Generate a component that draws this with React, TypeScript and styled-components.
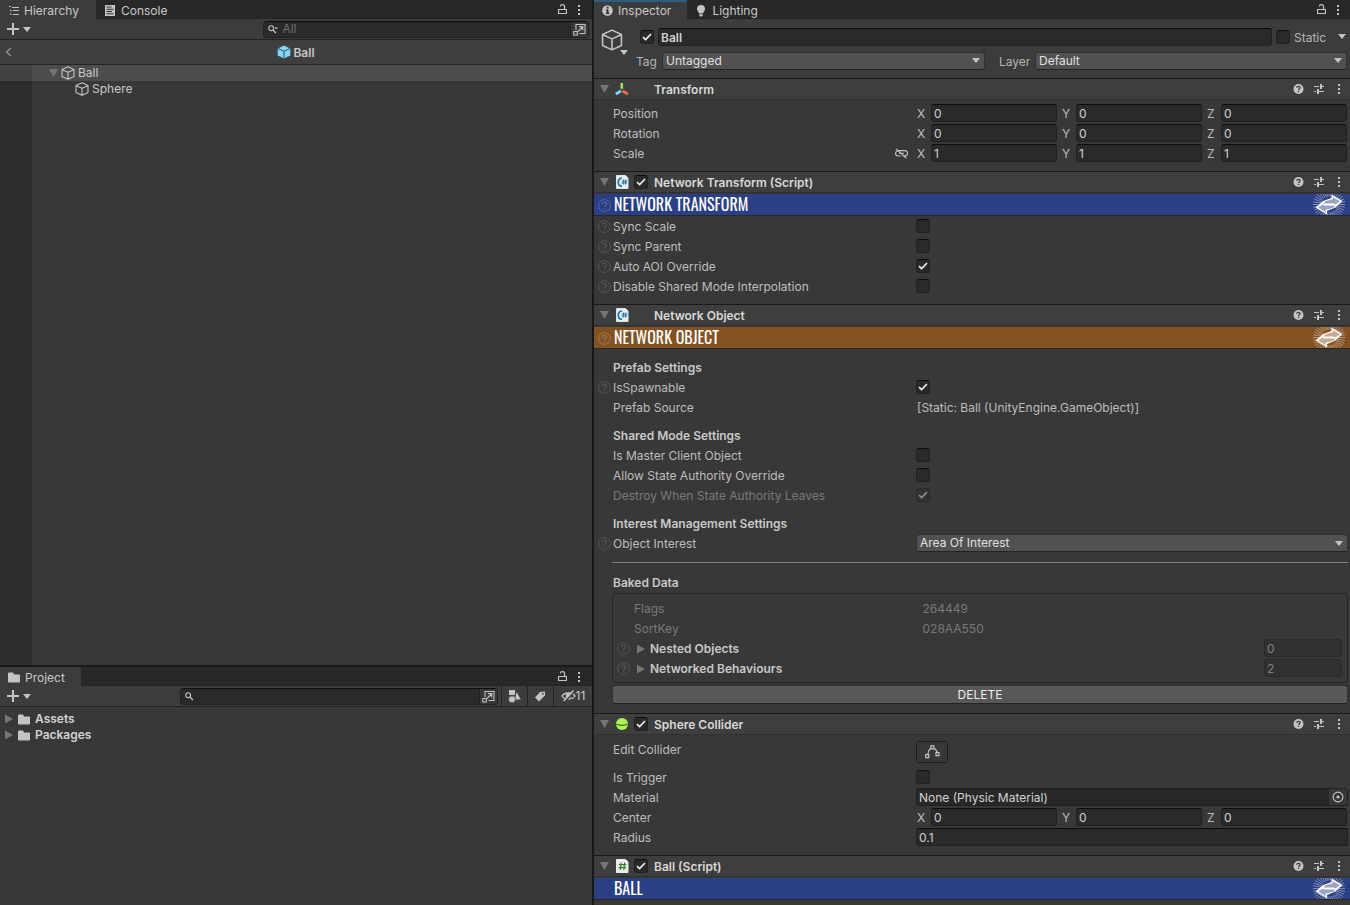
import React, { useId } from "react";
import styled, { createGlobalStyle, css } from "styled-components";

const GlobalStyle = createGlobalStyle`
  *, *::before, *::after { box-sizing: border-box; }
  html, body { margin: 0; background: #191919; }
  body, button, input, select {
    font-family: Inter, "Liberation Sans", sans-serif;
    font-size: 12px;
    line-height: 16px;
    color: #c8c8c8;
  }
  h1, h2, h3, ul { margin: 0; padding: 0; font-size: 12px; list-style: none; }
  svg { display: block; flex: none; }
`;

/* ---------- shell ---------- */

const Editor = styled.div`
  display: grid;
  grid-template-columns: minmax(0, 592fr) minmax(0, 756fr);
  column-gap: 2px;
  height: 100vh;
  background: #191919;
  overflow: hidden;
`;

const LeftColumn = styled.div`
  display: grid;
  grid-template-rows: minmax(0, 665fr) minmax(0, 238fr);
  row-gap: 2px;
  min-height: 0;
`;

const Panel = styled.section`
  display: flex;
  flex-direction: column;
  min-width: 0;
  min-height: 0;
  background: #383838;
  overflow: hidden;
`;

const TabBar = styled.div`
  display: flex;
  flex: none;
  height: 19px;
  background: #282828;
  box-shadow: inset 0 -1px #232323;
`;

const Tab = styled.button<{ $active?: boolean; $focus?: boolean; $pad: number }>`
  display: flex;
  align-items: center;
  gap: 5px;
  border: 0;
  padding: 2px ${(p) => p.$pad}px 0 8px;
  background: ${(p) => (p.$active ? "#3c3c3c" : "transparent")};
  box-shadow: ${(p) => (p.$focus ? "inset 0 2px #2c5d87" : "none")};
`;

const TabTools = styled.div<{ $right: number }>`
  display: flex;
  align-items: center;
  gap: 6px;
  margin-left: auto;
  padding-right: ${(p) => p.$right}px;
`;

const IconButton = styled.button`
  display: flex;
  align-items: center;
  justify-content: center;
  flex: none;
  border: 0;
  padding: 0;
  background: none;
`;

const Toolbar = styled.div`
  display: flex;
  flex: none;
  align-items: center;
  height: 21px;
  background: #3c3c3c;
  border-bottom: 1px solid #232323;
`;

const AddButton = styled(IconButton)`
  gap: 4px;
  margin-left: 7px;
`;

const SearchBox = styled.label<{ $width: string }>`
  display: flex;
  align-items: center;
  width: ${(p) => p.$width};
  height: 17px;
  margin: 0 3px 0 auto;
  padding-left: 4px;
  background: #2a2a2a;
  border: 1px solid #212121;
  border-top-color: #0d0d0d;
  border-radius: 4px;
  overflow: hidden;
`;

const SearchInput = styled.input`
  flex: 1;
  min-width: 0;
  border: 0;
  padding: 0 4px;
  background: none;
  outline: 0;
  &::placeholder { color: #717171; opacity: 1; }
`;

const SearchJump = styled(IconButton)`
  width: 18px;
  height: 16px;
  background: #383838;
  border-left: 1px solid #212121;
`;

const ToolCell = styled(IconButton)<{ $width: number }>`
  width: ${(p) => p.$width}px;
  height: 20px;
  border-left: 1px solid #232323;
`;

/* ---------- hierarchy ---------- */

const StageHeader = styled.div`
  display: grid;
  grid-template-columns: 32px 1fr 32px;
  align-items: center;
  flex: none;
  height: 25px;
  background: #3f3f3f;
  border-bottom: 1px solid #232323;
`;

const StageBack = styled(IconButton)`
  width: 17px;
`;

const StageTitle = styled.h2`
  display: flex;
  justify-content: center;
  gap: 2px;
  padding-top: 1px;
  font-weight: 600;
`;

const Tree = styled.ul<{ $gutter?: boolean }>`
  flex: 1;
  padding-top: ${(p) => (p.$gutter ? 0 : 4)}px;
  ${(p) =>
    p.$gutter &&
    css`
      background: linear-gradient(to right, #2d2d2d 32px, #383838 32px);
    `}
`;

const TreeRow = styled.li<{ $indent: number; $selected?: boolean; $bold?: boolean }>`
  display: flex;
  align-items: center;
  gap: ${(p) => (p.$bold ? 5 : 3)}px;
  height: 16px;
  padding-left: ${(p) => p.$indent}px;
  font-weight: ${(p) => (p.$bold ? 600 : 400)};
  color: ${(p) => (p.$bold ? "#d2d2d2" : "#c8c8c8")};
  ${(p) =>
    p.$selected &&
    css`
      background: linear-gradient(to right, #424242 32px, #4d4d4d 32px);
    `}
`;

/* ---------- inspector ---------- */

const ObjectHeader = styled.header`
  display: grid;
  grid-template-columns: 35px minmax(0, 1fr);
  flex: none;
  height: 59px;
  padding: 8px 3px 0 7px;
  background: #3c3c3c;
`;

const ObjectIcon = styled(IconButton)`
  flex-direction: column;
  align-items: flex-start;
  justify-content: flex-start;
  padding-top: 2px;
  svg + svg { margin: -1px 0 0 19px; }
`;

const HeaderLines = styled.div`
  display: flex;
  flex-direction: column;
  gap: 5px;
`;

const HeaderLine = styled.div`
  display: flex;
  align-items: center;
  height: 19px;
`;

const NameLine = styled(HeaderLine)`
  gap: 4px;
  padding: 0 1px 0 4px;
`;

const HeaderLabel = styled.label<{ $width: number; $indent?: number }>`
  flex: none;
  width: ${(p) => p.$width}px;
  padding: 2px 0 0 ${(p) => p.$indent ?? 0}px;
  color: #b4b4b4;
`;

const fieldBox = css`
  height: 18px;
  border: 1px solid #212121;
  border-radius: 3px;
`;

const Field = styled.input<{ $bold?: boolean }>`
  ${fieldBox}
  flex: 1;
  width: 100%;
  min-width: 0;
  border-top-color: #0d0d0d;
  padding: 1px 2px 0;
  background: #2a2a2a;
  color: #d2d2d2;
  font-weight: ${(p) => (p.$bold ? 600 : 400)};
  outline: 0;
  &:disabled {
    background: #313131;
    border-color: #2a2a2a;
    color: #818181;
  }
`;

const CountField = styled(Field)`
  flex: none;
  width: 78px;
`;

const Stack = styled.span<{ $grow?: number }>`
  display: grid;
  align-items: center;
  flex: ${(p) => (p.$grow ? `${p.$grow} 1 0` : "none")};
  min-width: 0;
  > * { grid-area: 1 / 1; }
  > svg { pointer-events: none; justify-self: ${(p) => (p.$grow ? "end" : "center")}; }
`;

const SelectInput = styled.select`
  ${fieldBox}
  appearance: none;
  width: 100%;
  border-color: #303030;
  border-bottom-color: #242424;
  padding: 0 3px;
  background: #515151;
  color: #e0e0e0;
  outline: 0;
  & + svg { margin-right: 5px; }
`;

const CheckInput = styled.input`
  appearance: none;
  width: 14px;
  height: 14px;
  margin: 0;
  background: #2a2a2a;
  border: 1px solid #212121;
  border-top-color: #0d0d0d;
  border-radius: 3px;
  &:disabled { background: #313131; border-color: #2a2a2a; }
`;

const ComponentHeader = styled.header`
  display: flex;
  align-items: center;
  flex: none;
  height: 22px;
  padding: 0 5px 0 6px;
  background: #3e3e3e;
  border-top: 1px solid #1a1a1a;
  border-bottom: 1px solid #303030;
`;

const TypeIcon = styled.span`
  display: flex;
  justify-content: center;
  width: 14px;
  margin: 0 5px 0 6px;
`;

const ToggleSlot = styled.span`
  display: flex;
  width: 20px;
`;

const ComponentTitle = styled.h2`
  flex: 1;
  padding-top: 2px;
  color: #d8d8d8;
  font-weight: 600;
`;

const HeaderTools = styled.span`
  display: flex;
  gap: 8px;
  button { width: 12px; }
`;

const Banner = styled.div<{ $color: string }>`
  display: flex;
  align-items: center;
  flex: none;
  height: 22px;
  margin-top: 1px;
  padding: 0 5px 0 4px;
  background: ${(p) => p.$color};
  border-bottom: 1px solid #282828;
`;

const BannerTitle = styled.h3`
  flex: 1;
  padding: 0 0 2px 1px;
  color: #fff;
  font-family: Oswald, "Roboto Condensed", "Liberation Sans", sans-serif;
  font-size: 16px;
  font-weight: 400;
  line-height: 20px;
`;

const HelpSlot = styled.span`
  display: flex;
  width: 15px;
  color: #555;
`;

const BannerHelp = styled(HelpSlot)`
  padding-top: 2px;
  color: rgba(255, 255, 255, 0.2);
`;

const Body = styled.div<{ $top: number }>`
  flex: none;
  padding: ${(p) => p.$top}px 2px 8px 4px;
`;

const Group = styled.div`
  & + & { margin-top: 8px; }
`;

const Row = styled.div`
  display: flex;
  align-items: center;
  height: 20px;
`;

const RowLabel = styled.label<{ $dim?: boolean }>`
  flex: 1;
  padding-top: 1px;
  color: ${(p) => (p.$dim ? "#787878" : "#bebebe")};
`;

const RowValue = styled.div`
  display: flex;
  align-items: center;
  flex: none;
  width: calc(56% + 12px);
`;

const TextValue = styled.output`
  padding: 1px 0 0 1px;
  color: #bebebe;
`;

const Heading = styled.h3`
  height: 20px;
  padding: 2px 0 0 15px;
  font-weight: 600;
  line-height: 18px;
  color: #c8c8c8;
`;

const Vector = styled.div`
  display: grid;
  flex: 1;
  grid-template-columns: repeat(3, minmax(0, 1fr));
  column-gap: 4px;
  padding-right: 1px;
`;

const Axis = styled.label`
  display: grid;
  grid-template-columns: 15px minmax(0, 1fr);
  align-items: center;
  color: #bebebe;
`;

const AxisName = styled.span`
  padding: 1px 0 0 1px;
`;

const LinkSlot = styled.span`
  display: flex;
  margin-right: 8px;
`;

const Rule = styled.hr`
  height: 1px;
  margin: 9px 0 9px 14px;
  border: 0;
  background: #7f7f7f;
`;

const BakedBox = styled.div`
  margin: 1px 0 2px 14px;
  padding: 4px 5px 4px 4px;
  border: 1px solid #242424;
  border-radius: 4px;
`;

const BakedRow = styled(Row)`
  color: #787878;
`;

const BakedName = styled.span`
  flex: none;
  width: calc(42% + 1px);
  padding: 1px 0 0 17px;
`;

const BakedValue = styled.span`
  padding-top: 1px;
`;

const FoldoutButton = styled(IconButton)`
  flex: 1;
  justify-content: flex-start;
  gap: 5px;
  padding: 1px 0 0 5px;
  font-weight: 600;
`;

const DeleteButton = styled.button`
  display: block;
  width: calc(100% - 14px);
  height: 19px;
  margin: 0 0 1px 14px;
  border: 1px solid #303030;
  border-bottom-color: #242424;
  border-radius: 3px;
  padding: 0;
  background: #585858;
  color: #eee;
`;

const EditRow = styled(Row)`
  align-items: flex-start;
  height: 26px;
`;

const EditButton = styled(IconButton)`
  width: 32px;
  height: 22px;
  border: 1px solid #1c1c1c;
  border-radius: 3px;
  background: #383838;
`;

const ObjectField = styled.div`
  ${fieldBox}
  display: flex;
  flex: 1;
  align-items: center;
  padding-left: 2px;
  background: #282828;
  color: #d2d2d2;
  overflow: hidden;
  button { width: 18px; height: 16px; background: #373737; }
`;

const ObjectName = styled.span`
  flex: 1;
  padding-top: 1px;
`;

/* ---------- icons ---------- */

const LIGHT = "#c4c4c4";

const ArrowDown = ({ w = 8, color = LIGHT }: { w?: number; color?: string }) => (
  <svg width={w} height={w === 8 ? 5 : 8} viewBox="0 0 8 5" preserveAspectRatio="none" aria-hidden="true">
    <path d="M0 0h8L4 5z" fill={color} />
  </svg>
);
const ArrowRight = () => (
  <svg width="8" height="10" aria-hidden="true"><path d="M0 .5v9L8 5z" fill="#757575" /></svg>
);
const Check = ({ dim }: { dim?: boolean }) => (
  <svg width="10" height="8" viewBox="0 0 10 8" fill="none" aria-hidden="true">
    <path d="M1 4.2 3.6 6.6 9 1" stroke={dim ? "#909090" : "#f0f0f0"} strokeWidth="1.6" />
  </svg>
);
const Lock = () => (
  <svg width="9" height="11" viewBox="0 0 9 11" fill="none" stroke={LIGHT} aria-hidden="true">
    <path d="M.5 5.5h8v4h-8zM2.5 2.5V2C2.5 1.2 3.2.6 4.5.6S6.5 1.2 6.5 2v3.5" strokeWidth="1.2" />
  </svg>
);
const Dots = () => (
  <svg width="12" height="12" viewBox="0 0 12 12" fill={LIGHT} aria-hidden="true">
    <path d="M5 1h2v2H5zM5 5h2v2H5zM5 9h2v2H5z" />
  </svg>
);
const Plus = () => (
  <svg width="12" height="12" aria-hidden="true"><path d="M5 0h2v5h5v2H7v5H5V7H0V5h5z" fill={LIGHT} /></svg>
);
const ListIcon = () => (
  <svg width="11" height="10" viewBox="0 0 11 10" fill={LIGHT} aria-hidden="true">
    <path d="M1 0h2v1H1zM4 1h7v1H4zM2 4h1.500v1.200H2zM5 4h6v1H5zM2 7.500h1.500v1.200H2zM5 8h6v1H5z" />
  </svg>
);
const ConsoleIcon = () => (
  <svg width="12" height="11" viewBox="-1 0 12 11" aria-hidden="true">
    <path d="M0 0h10v11H0z" fill={LIGHT} />
    <path d="M1.500 2h5M1.500 4.300h7M1.500 6.500h5.500M1.500 8.800h7" stroke="#282828" />
  </svg>
);
const InfoIcon = () => (
  <svg width="11" height="11" viewBox="0 0 11 11" aria-hidden="true">
    <circle cx="5.500" cy="5.500" r="5.300" fill={LIGHT} />
    <path d="M4.600 1.800h1.900v1.700H4.600zM4 4.600h2.500v3.200h.8V9H3.900V7.800h.8V5.800H4z" fill="#2c2c2c" />
  </svg>
);
const BulbIcon = () => (
  <svg width="12" height="12" viewBox="-1 0 12 12" fill={LIGHT} aria-hidden="true">
    <path d="M5 0a4 4 0 0 1 4 4c0 2-1.500 2.800-2 4.500H3C2.500 6.800 1 6 1 4a4 4 0 0 1 4-4zM3.200 9.200h3.600v1L6 11.500H4l-.8-1.300z" />
  </svg>
);
const FolderIcon = () => (
  <svg width="12" height="11" viewBox="0 0 12 11" fill={LIGHT} aria-hidden="true">
    <path d="M0 1.500Q0 .5 1 .5h4l1 2h5q1 0 1 1v6q0 1-1 1H1q-1 0-1-1z" />
  </svg>
);
const SearchIcon = ({ menu }: { menu?: boolean }) => (
  <svg width="10" height="9" viewBox="0 0 10 9" fill="none" aria-hidden="true">
    <circle cx="3.200" cy="3.200" r="2.400" stroke={LIGHT} strokeWidth="1.100" />
    <path d="M5 5l2.800 3" stroke={LIGHT} strokeWidth="1.300" />
    {menu && <path d="M6.500 2.500H10L8.200 4.500z" fill={LIGHT} />}
  </svg>
);
const JumpIcon = () => (
  <svg width="13" height="13" viewBox="0 0 13 13" fill="none" stroke={LIGHT} aria-hidden="true">
    <path d="M3 7V1.500h9v9H6.500M.8 8.500h3.500V12H.8z" strokeWidth="1.100" />
    <path d="M5 8.500 9.500 4M6 3.700h3.700v3.700" strokeWidth="1.200" />
  </svg>
);
const BackIcon = () => (
  <svg width="7" height="10" fill="none" aria-hidden="true"><path d="M6 1 1.500 5 6 9" stroke="#999" strokeWidth="1.200" /></svg>
);
const Cube = ({ size, bg }: { size: number; bg?: string }) => (
  <svg width={size} height={size} viewBox="0 0 14 14" fill="none" strokeLinejoin="round" aria-hidden="true">
    {bg ? (
      <>
        <path d="M7 .500 13.300 3.500v7L7 13.500.700 10.500v-7z" fill="#7fd6fd" />
        <path d="M.700 3.400 7 6.300l6.300-2.900M7 6.300v7.200" stroke={bg} strokeWidth=".9" />
      </>
    ) : (
      <path
        d="M7 .700 13 3.500v7L7 13.300 1 10.500v-7zM1.200 3.700 7 6.300l5.800-2.600M7 6.300v7"
        stroke={LIGHT}
        strokeWidth={size > 16 ? 1 : 1.100}
      />
    )}
  </svg>
);
const HelpRing = () => (
  <svg width="13" height="13" viewBox="0 0 13 13" fill="none" stroke="currentColor" aria-hidden="true">
    <circle cx="6.500" cy="6.500" r="5.900" />
    <path d="M4.500 5.200C4.500 3.800 5.300 3.200 6.500 3.200s2 .7 2 1.700c0 1.300-1.900 1.400-1.900 3M6.600 9v1.200" strokeWidth="1.200" />
  </svg>
);
const HelpSolid = () => (
  <svg width="12" height="12" viewBox="0 0 12 12" fill="none" aria-hidden="true">
    <circle cx="5.500" cy="6" r="5" fill={LIGHT} />
    <path d="M3.800 4.800c0-1 .7-1.500 1.700-1.500s1.700.5 1.700 1.300c0 1.100-1.600 1.200-1.600 2.400M5.500 7.800v1.300" stroke="#3e3e3e" strokeWidth="1.300" />
  </svg>
);
const Presets = () => (
  <svg width="12" height="12" viewBox="0 0 12 12" fill={LIGHT} aria-hidden="true">
    <path d="M1 3h5v1H1zM7 1h2v5H7zM9 3h2v1H9zM1 8h2v1H1zM4 6h2v5H4zM6 8h5v1H6z" />
  </svg>
);
const TransformIcon = () => (
  <svg width="14" height="13" viewBox="0 0 14 13" strokeWidth="2.600" aria-hidden="true">
    <path d="M6.800 0v5.800" stroke="#a5e554" />
    <path d="M6 8 .800 11" stroke="#7fd6fd" />
    <path d="M7.600 8l5.200 3" stroke="#ff6b40" />
  </svg>
);
const ScriptIcon = ({ green }: { green?: boolean }) => (
  <svg width="14" height="14" viewBox="-1 0 14 14" fill="none" aria-hidden="true">
    <path d="M.500.500h9l2.500 2.500v10.500H.500z" fill="#ececec" stroke={green ? "#ececec" : "#dfe3e6"} />
    {green ? (
      <path d="M5.200 3.500 4.300 11M8.700 3.500 7.800 11M2.800 5.700h7.500M2.600 8.700h7.500" stroke="#2f7d32" strokeWidth="1.200" />
    ) : (
      <>
        <path d="M6 3.300C3.500 3 2.300 4.800 2.300 7.200S3.500 11.400 6 11" stroke="#1079b0" strokeWidth="1.700" />
        <path d="M7.700 4.500 7.200 9.500M10 4.500l-.5 5M5.800 6.100h5.400M5.600 8h5.400" stroke="#1079b0" />
      </>
    )}
  </svg>
);
const SphereIcon = () => (
  <svg width="12" height="12" viewBox="0 0 12 12" fill="none" aria-hidden="true">
    <circle cx="6" cy="6" r="6" fill="#a9f64f" />
    <path d="M.300 6.300Q6 8.500 11.700 6.300" stroke="#3a5a22" strokeWidth="1.100" />
  </svg>
);
const EyeOff = () => (
  <svg width="15" height="12" viewBox="0 0 15 12" fill="none" stroke={LIGHT} strokeWidth="1.300" aria-hidden="true">
    <path d="M1 6C3.500 2 11.500 2 14 6 11.500 10 3.500 10 1 6z" />
    <circle cx="7.500" cy="6" r="2" fill={LIGHT} />
    <path d="M4 11.500 13.500 1.500" stroke="#3c3c3c" strokeWidth="1.400" />
    <path d="M2.500 11 12.500.500" strokeWidth="1.400" />
  </svg>
);
const Unlinked = () => (
  <svg width="13" height="11" viewBox="0 0 13 11" fill="none" stroke={LIGHT} strokeWidth="1.100" aria-hidden="true">
    <path d="M5.500 8H3.300a2.700 2.700 0 0 1 0-5.400H9.700a2.700 2.700 0 0 1 .8 5.300H7.500M4 5.300h5M1 .800 11.500 10.300" />
  </svg>
);
const ShapesIcon = () => (
  <svg width="13" height="13" viewBox="0 0 13 13" fill={LIGHT} aria-hidden="true">
    <path d="M1 0h6v5H1zM8.500 2 12.800 9.500H7z" />
    <circle cx="4" cy="9.300" r="3.500" stroke="#3c3c3c" strokeWidth=".7" />
  </svg>
);
const TagIcon = () => (
  <svg width="12" height="11" viewBox="1 0 12 11" aria-hidden="true">
    <path d="M6 1 11 .500V4.500L5 10.500 1 6.500z" fill={LIGHT} />
    <circle cx="8.800" cy="2.800" r=".9" fill="#3c3c3c" />
  </svg>
);
const EditPoints = () => (
  <svg width="15" height="14" viewBox="0 0 15 14" fill="none" stroke={LIGHT} strokeWidth="1.200" aria-hidden="true">
    <path d="M.800 9.700h3v3h-3zM5.800.900h3v3h-3zM11 7.700h3v3h-3zM2.700 9.500C3 6.500 4 4.500 5.800 3M8.800 3c1.800 1.200 2.900 2.700 3.300 4.500" />
  </svg>
);
const PickIcon = () => (
  <svg width="12" height="12" viewBox="0 0 12 12" fill="none" aria-hidden="true">
    <circle cx="6" cy="6" r="4.900" stroke={LIGHT} strokeWidth="1.100" />
    <circle cx="6" cy="6" r="1.600" fill={LIGHT} />
  </svg>
);
const RAYS = Array.from({ length: 36 }, (_, i) => (i * Math.PI) / 18);
const NetworkLogo = ({ tint }: { tint: string }) => (
  <svg width="32" height="21" viewBox="0 0 32 21" fill="none" aria-hidden="true">
    {RAYS.map((a) => (
      <path
        key={a}
        d={`M${16 + 8 * Math.cos(a)} ${10.500 + 8 * Math.sin(a)}L${16 + 16 * Math.cos(a)} ${10.500 + 16 * Math.sin(a)}`}
        stroke="#fff"
        strokeOpacity=".4"
      />
    ))}
    <path d="M2.500 13.500 10 7l8.500-3V.500L29.500 7l-7 6.500L14 17v3.500z" fill="#fff" />
    <path
      d="M10.500 9.600 12.300 7.300 20 5.100V3.200L27 7.200 22.300 10.600 21 9.600zM5.200 13.400 9.800 10.400 11 11.400h11L20.500 13.700 12.600 15.800v2.400z"
      fill={tint}
      fillOpacity=".48"
    />
  </svg>
);

/* ---------- parts ---------- */

function Checkbox({ id, checked, disabled, label }: { id?: string; checked?: boolean; disabled?: boolean; label?: string }) {
  return (
    <Stack>
      <CheckInput id={id} type="checkbox" defaultChecked={checked} disabled={disabled} aria-label={label} />
      {checked && <Check dim={disabled} />}
    </Stack>
  );
}

function Select({ id, value, grow = 1 }: { id: string; value: string; grow?: number }) {
  return (
    <Stack $grow={grow}>
      <SelectInput id={id} defaultValue={value}>
        <option>{value}</option>
      </SelectInput>
      <ArrowDown />
    </Stack>
  );
}

function Property({
  label,
  help,
  dim,
  before,
  children,
}: {
  label: string;
  help?: boolean;
  dim?: boolean;
  before?: React.ReactNode;
  children: (id: string) => React.ReactNode;
}) {
  const id = useId();
  return (
    <Row>
      <HelpSlot>{help && <HelpRing />}</HelpSlot>
      <RowLabel htmlFor={id} $dim={dim}>{label}</RowLabel>
      {before && <LinkSlot>{before}</LinkSlot>}
      <RowValue>{children(id)}</RowValue>
    </Row>
  );
}

function Vector3({ id, values }: { id: string; values: string[] }) {
  return (
    <Vector>
      {["X", "Y", "Z"].map((axis, i) => (
        <Axis key={axis}>
          <AxisName>{axis}</AxisName>
          <Field id={i === 0 ? id : undefined} defaultValue={values[i]} />
        </Axis>
      ))}
    </Vector>
  );
}

function Header({ title, icon, toggle }: { title: string; icon: React.ReactNode; toggle?: boolean }) {
  return (
    <ComponentHeader>
      <IconButton aria-label={`Collapse ${title}`}><ArrowDown w={9} color="#757575" /></IconButton>
      <TypeIcon>{icon}</TypeIcon>
      <ToggleSlot>{toggle && <Checkbox checked label={`Enable ${title}`} />}</ToggleSlot>
      <ComponentTitle>{title}</ComponentTitle>
      <HeaderTools>
        <IconButton aria-label="Help"><HelpSolid /></IconButton>
        <IconButton aria-label="Presets"><Presets /></IconButton>
        <IconButton aria-label="More"><Dots /></IconButton>
      </HeaderTools>
    </ComponentHeader>
  );
}

function TitleBanner({ title, color, help }: { title: string; color: string; help?: boolean }) {
  return (
    <Banner $color={color}>
      <BannerHelp>{help && <HelpRing />}</BannerHelp>
      <BannerTitle>{title}</BannerTitle>
      <NetworkLogo tint={color} />
    </Banner>
  );
}

function PanelTools({ right }: { right: number }) {
  return (
    <TabTools $right={right}>
      <IconButton aria-label="Lock"><Lock /></IconButton>
      <IconButton aria-label="Panel menu"><Dots /></IconButton>
    </TabTools>
  );
}

const BLUE = "#2a3f85";
const ORANGE = "#845222";

export default function App() {
  return (
    <>
      <GlobalStyle />
      <Editor>
        <LeftColumn>
          <Panel>
            <TabBar>
              <Tab $active $pad={17}><ListIcon />Hierarchy</Tab>
              <Tab $pad={17}><ConsoleIcon />Console</Tab>
              <PanelTools right={7} />
            </TabBar>
            <Toolbar>
              <AddButton aria-label="Create"><Plus /><ArrowDown /></AddButton>
              <SearchBox $width="55%">
                <SearchIcon menu />
                <SearchInput placeholder="All" aria-label="Search hierarchy" />
                <SearchJump aria-label="Open search"><JumpIcon /></SearchJump>
              </SearchBox>
            </Toolbar>
            <StageHeader>
              <StageBack aria-label="Back"><BackIcon /></StageBack>
              <StageTitle><Cube size={14} bg="#3f3f3f" />Ball</StageTitle>
            </StageHeader>
            <Tree $gutter>
              <TreeRow $indent={49} $selected>
                <ArrowDown w={9} color="#757575" /><Cube size={14} />Ball
              </TreeRow>
              <TreeRow $indent={75}><Cube size={14} />Sphere</TreeRow>
            </Tree>
          </Panel>

          <Panel>
            <TabBar>
              <Tab $active $pad={16}><FolderIcon />Project</Tab>
              <PanelTools right={7} />
            </TabBar>
            <Toolbar>
              <AddButton aria-label="Create"><Plus /><ArrowDown /></AddButton>
              <SearchBox $width="calc(54% - 2px)">
                <SearchIcon />
                <SearchInput aria-label="Search project" />
                <SearchJump aria-label="Open search"><JumpIcon /></SearchJump>
              </SearchBox>
              <ToolCell $width={26} aria-label="Filter by type"><ShapesIcon /></ToolCell>
              <ToolCell $width={26} aria-label="Filter by label"><TagIcon /></ToolCell>
              <ToolCell $width={39} aria-label="Hidden packages"><EyeOff />11</ToolCell>
            </Toolbar>
            <Tree>
              <TreeRow $indent={5} $bold><ArrowRight /><FolderIcon />Assets</TreeRow>
              <TreeRow $indent={5} $bold><ArrowRight /><FolderIcon />Packages</TreeRow>
            </Tree>
          </Panel>
        </LeftColumn>

        <Panel>
          <TabBar>
            <Tab $active $focus $pad={16}><InfoIcon />Inspector</Tab>
            <Tab $pad={16}><BulbIcon />Lighting</Tab>
            <PanelTools right={6} />
          </TabBar>

          <ObjectHeader>
            <ObjectIcon aria-label="Select icon"><Cube size={22} /><ArrowDown /></ObjectIcon>
            <HeaderLines>
              <NameLine>
                <Checkbox checked label="Active" />
                <Field $bold defaultValue="Ball" aria-label="Name" />
                <Checkbox id="static" />
                <HeaderLabel htmlFor="static" $width={40}>Static</HeaderLabel>
                <IconButton aria-label="Static flags"><ArrowDown /></IconButton>
              </NameLine>
              <HeaderLine>
                <HeaderLabel htmlFor="tag" $width={26}>Tag</HeaderLabel>
                <Select id="tag" value="Untagged" grow={323} />
                <HeaderLabel htmlFor="layer" $width={50} $indent={14}>Layer</HeaderLabel>
                <Select id="layer" value="Default" grow={312} />
              </HeaderLine>
            </HeaderLines>
          </ObjectHeader>

          <Header title="Transform" icon={<TransformIcon />} />
          <Body $top={3}>
            <Property label="Position">{(id) => <Vector3 id={id} values={["0", "0", "0"]} />}</Property>
            <Property label="Rotation">{(id) => <Vector3 id={id} values={["0", "0", "0"]} />}</Property>
            <Property label="Scale" before={<Unlinked />}>
              {(id) => <Vector3 id={id} values={["1", "1", "1"]} />}
            </Property>
          </Body>

          <Header title="Network Transform (Script)" icon={<ScriptIcon />} toggle />
          <TitleBanner title="NETWORK TRANSFORM" color={BLUE} help />
          <Body $top={0}>
            <Property label="Sync Scale" help>{(id) => <Checkbox id={id} />}</Property>
            <Property label="Sync Parent" help>{(id) => <Checkbox id={id} />}</Property>
            <Property label="Auto AOI Override" help>{(id) => <Checkbox id={id} checked />}</Property>
            <Property label="Disable Shared Mode Interpolation" help>{(id) => <Checkbox id={id} />}</Property>
          </Body>

          <Header title="Network Object" icon={<ScriptIcon />} />
          <TitleBanner title="NETWORK OBJECT" color={ORANGE} help />
          <Body $top={8}>
            <Group>
              <Heading>Prefab Settings</Heading>
              <Property label="IsSpawnable" help>{(id) => <Checkbox id={id} checked />}</Property>
              <Property label="Prefab Source">
                {(id) => <TextValue id={id}>[Static: Ball (UnityEngine.GameObject)]</TextValue>}
              </Property>
            </Group>
            <Group>
              <Heading>Shared Mode Settings</Heading>
              <Property label="Is Master Client Object">{(id) => <Checkbox id={id} />}</Property>
              <Property label="Allow State Authority Override">{(id) => <Checkbox id={id} />}</Property>
              <Property label="Destroy When State Authority Leaves" dim>
                {(id) => <Checkbox id={id} checked disabled />}
              </Property>
            </Group>
            <Group>
              <Heading>Interest Management Settings</Heading>
              <Property label="Object Interest" help>{(id) => <Select id={id} value="Area Of Interest" />}</Property>
            </Group>
            <Rule />
            <Heading>Baked Data</Heading>
            <BakedBox>
              <BakedRow><BakedName>Flags</BakedName><BakedValue>264449</BakedValue></BakedRow>
              <BakedRow><BakedName>SortKey</BakedName><BakedValue>028AA550</BakedValue></BakedRow>
              <Row>
                <HelpSlot><HelpRing /></HelpSlot>
                <FoldoutButton><ArrowRight />Nested Objects</FoldoutButton>
                <CountField disabled defaultValue="0" aria-label="Nested Objects count" />
              </Row>
              <Row>
                <HelpSlot><HelpRing /></HelpSlot>
                <FoldoutButton><ArrowRight />Networked Behaviours</FoldoutButton>
                <CountField disabled defaultValue="2" aria-label="Networked Behaviours count" />
              </Row>
            </BakedBox>
            <DeleteButton>DELETE</DeleteButton>
          </Body>

          <Header title="Sphere Collider" icon={<SphereIcon />} toggle />
          <Body $top={6}>
            <EditRow>
              <HelpSlot />
              <RowLabel as="span">Edit Collider</RowLabel>
              <RowValue><EditButton aria-label="Edit Collider"><EditPoints /></EditButton></RowValue>
            </EditRow>
            <Property label="Is Trigger">{(id) => <Checkbox id={id} />}</Property>
            <Property label="Material">
              {(id) => (
                <ObjectField>
                  <ObjectName>None (Physic Material)</ObjectName>
                  <IconButton id={id} aria-label="Select material"><PickIcon /></IconButton>
                </ObjectField>
              )}
            </Property>
            <Property label="Center">{(id) => <Vector3 id={id} values={["0", "0", "0"]} />}</Property>
            <Property label="Radius">{(id) => <Field id={id} defaultValue="0.1" />}</Property>
          </Body>

          <Header title="Ball (Script)" icon={<ScriptIcon green />} toggle />
          <TitleBanner title="BALL" color={BLUE} />
        </Panel>
      </Editor>
    </>
  );
}
